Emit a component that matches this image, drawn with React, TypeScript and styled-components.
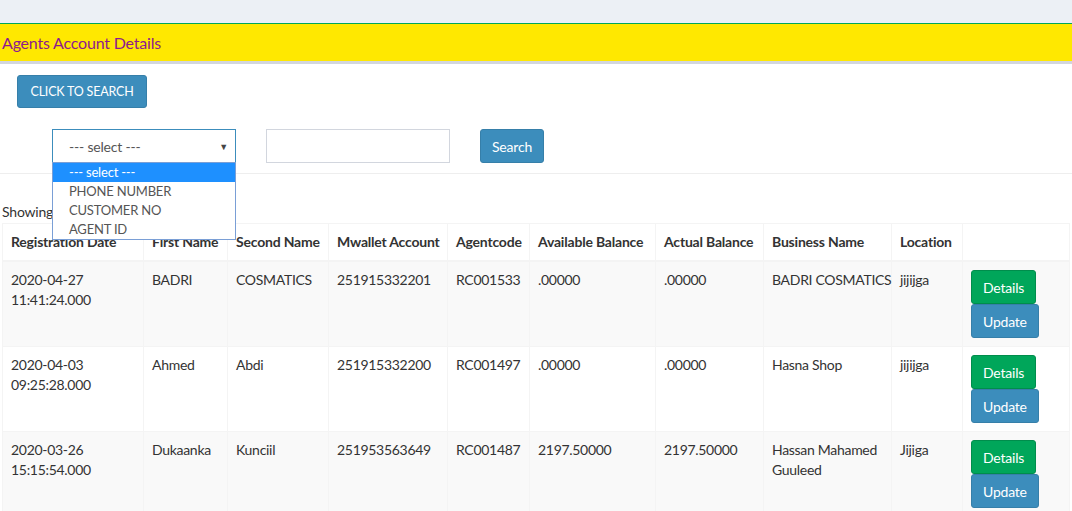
import React from "react";
import styled, { createGlobalStyle } from "styled-components";

const Global = createGlobalStyle`
  html, body { margin: 0; padding: 0; background: #fff; }
  body { font-family: Lato, "Open Sans", sans-serif; font-size: 14px; color: #333; }
  * { box-sizing: border-box; }
`;

const TopBar = styled.div`
  height: 23px;
  background: #ecf0f5;
`;

const TitleBox = styled.div`
  height: 41px;
  background: #ffe800;
  border-top: 1px solid #00a65a;
  border-bottom: 3px solid #d2d6de;
  display: flex;
  align-items: center;
  padding-left: 2px;
  color: #8e1a8e;
  font-size: 16px;
  letter-spacing: -0.2px;
`;

const Content = styled.div`
  padding: 11px 3px 0 2px;
`;

const Btn = styled.button<{ $variant?: "primary" | "success" }>`
  font-family: inherit;
  display: inline-flex;
  align-items: center;
  justify-content: center;
  height: 34px;
  padding: 0 11px;
  font-size: 14px;
  letter-spacing: -0.2px;
  white-space: nowrap;
  color: #fff;
  border-radius: 3px;
  border: 1px solid ${(p) => (p.$variant === "success" ? "#008d4c" : "#367fa9")};
  background: ${(p) => (p.$variant === "success" ? "#00a65a" : "#3c8dbc")};
  cursor: pointer;
`;

const SearchToggle = styled(Btn)`
  margin-left: 15px;
  width: 130px;
  height: 33px;
  padding: 0;
  font-size: 12.5px;
  letter-spacing: -0.2px;
  text-transform: uppercase;
`;

const FilterRow = styled.div`
  display: flex;
  align-items: center;
  gap: 30px;
  margin-top: 21px;
  padding-left: 52px;
  padding-bottom: 10px;
  border-bottom: 1px solid #eee;
  margin-left: -2px;
  margin-right: -3px;
`;

const SelectWrap = styled.div`
  position: relative;
  width: 184px;
`;

const SelectBox = styled.div`
  height: 34px;
  border: 1px solid #3c8dbc;
  display: flex;
  align-items: center;
  justify-content: space-between;
  padding: 0 7px 0 16px;
  color: #555;
  font-size: 14px;
  letter-spacing: -0.2px;
  background: #fff;
`;

const Caret = styled.span`
  font-size: 9px;
  color: #444;
`;

const OptionList = styled.ul`
  position: absolute;
  left: 0;
  top: 33px;
  width: 184px;
  margin: 0;
  padding: 0;
  list-style: none;
  background: #fff;
  border: 1px solid #7a9fd6;
  z-index: 5;
`;

const Option = styled.li<{ $active?: boolean }>`
  height: 19px;
  line-height: 19px;
  padding-left: 16px;
  font-size: 13px;
  letter-spacing: -0.2px;
  color: ${(p) => (p.$active ? "#fff" : "#555")};
  background: ${(p) => (p.$active ? "#1e90ff" : "#fff")};
`;

const TextInput = styled.input`
  width: 184px;
  height: 34px;
  border: 1px solid #d2d6de;
  padding: 6px 12px;
  font-family: inherit;
  font-size: 14px;
`;

const Showing = styled.div`
  margin-top: 28px;
  height: 21px;
  line-height: 20px;
  font-size: 14px;
  letter-spacing: -0.2px;
  color: #333;
`;

const Table = styled.table`
  width: 1067px;
  border-collapse: collapse;
  table-layout: fixed;
  border: 1px solid #f4f4f4;
`;

const Th = styled.th`
  text-align: left;
  font-weight: 700;
  padding: 8px;
  line-height: 20px;
  border: 1px solid #f4f4f4;
  border-bottom-width: 2px;
  white-space: nowrap;
  letter-spacing: -0.2px;
  color: #333;
`;

const Tr = styled.tr<{ $striped?: boolean }>`
  background: ${(p) => (p.$striped ? "#f9f9f9" : "#fff")};
`;

const Td = styled.td`
  vertical-align: top;
  padding: 8px;
  line-height: 20px;
  font-size: 14px;
  letter-spacing: -0.3px;
  border: 1px solid #f4f4f4;
  color: #333;
`;

const Actions = styled.div`
  display: flex;
  flex-direction: column;
  align-items: flex-start;
`;

const cols = [141, 84, 101, 119, 82, 126, 108, 128, 71, 107];
const heads = [
  "Registration Date",
  "First Name",
  "Second Name",
  "Mwallet Account",
  "Agentcode",
  "Available Balance",
  "Actual Balance",
  "Business Name",
  "Location",
  "",
];

const rows = [
  ["2020-04-27 11:41:24.000", "BADRI", "COSMATICS", "251915332201", "RC001533", ".00000", ".00000", "BADRI\u00a0COSMATICS", "jijijga"],
  ["2020-04-03 09:25:28.000", "Ahmed", "Abdi", "251915332200", "RC001497", ".00000", ".00000", "Hasna Shop", "jijijga"],
  ["2020-03-26 15:15:54.000", "Dukaanka", "Kunciil", "251953563649", "RC001487", "2197.50000", "2197.50000", "Hassan Mahamed Guuleed", "Jijiga"],
];

export default function App() {
  return (
    <>
      <Global />
      <TopBar />
      <TitleBox>Agents Account Details</TitleBox>
      <Content>
        <SearchToggle>Click to Search</SearchToggle>
        <FilterRow>
          <SelectWrap>
            <SelectBox>
              <span>--- select ---</span>
              <Caret>▼</Caret>
            </SelectBox>
            <OptionList>
              <Option $active>--- select ---</Option>
              <Option>PHONE NUMBER</Option>
              <Option>CUSTOMER NO</Option>
              <Option>AGENT ID</Option>
            </OptionList>
          </SelectWrap>
          <TextInput />
          <Btn>Search</Btn>
        </FilterRow>
        <Showing>Showing</Showing>
        <Table>
          <colgroup>
            {cols.map((w, i) => (
              <col key={i} style={{ width: w }} />
            ))}
          </colgroup>
          <thead>
            <tr>
              {heads.map((h, i) => (
                <Th key={i}>{h}</Th>
              ))}
            </tr>
          </thead>
          <tbody>
            {rows.map((r, i) => (
              <Tr key={i} $striped={i % 2 === 0}>
                {r.map((c, j) => (
                  <Td key={j}>{c}</Td>
                ))}
                <Td>
                  <Actions>
                    <Btn $variant="success">Details</Btn>
                    <Btn>Update</Btn>
                  </Actions>
                </Td>
              </Tr>
            ))}
          </tbody>
        </Table>
      </Content>
    </>
  );
}
